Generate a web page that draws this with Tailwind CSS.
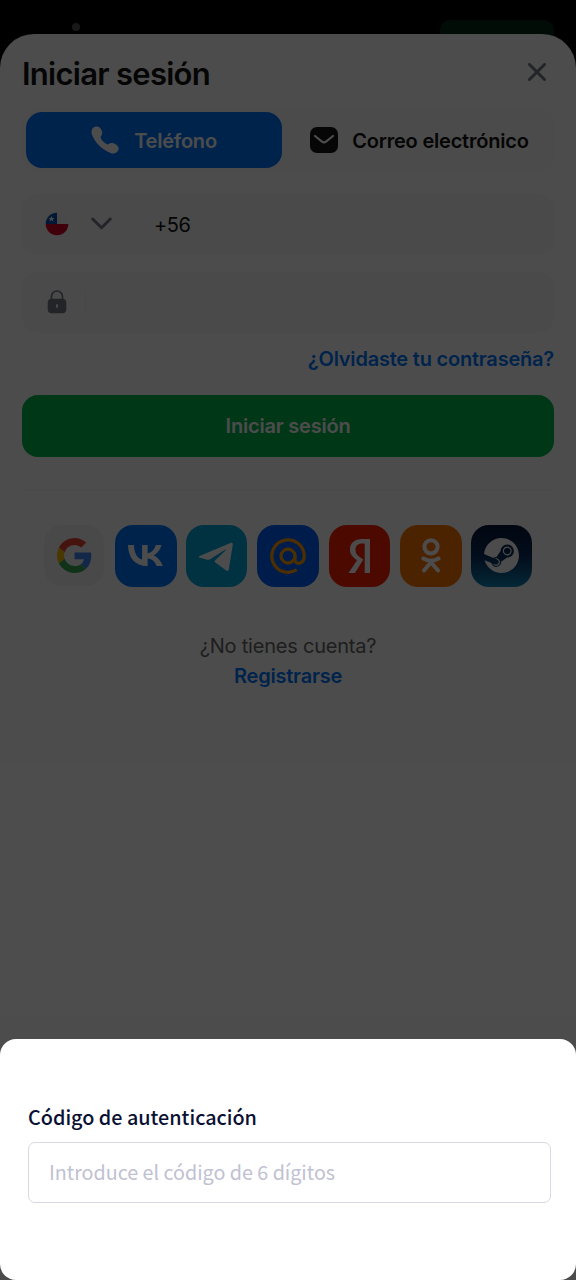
<!DOCTYPE html>
<html lang="es">
<head>
<meta charset="utf-8">
<title>Iniciar sesión</title>
<script src="https://cdn.jsdelivr.net/npm/@tailwindcss/browser@4"></script>
</head>
<body class="bg-black font-['Inter',sans-serif]">
<div class="relative w-[576px] h-[1280px] overflow-hidden bg-black">
  <div class="absolute left-[72px] top-[23px] size-2 rounded-full bg-[#555]"></div>
  <div class="absolute left-[440px] top-5 w-[114px] h-10 rounded-[10px] bg-[#002a12]"></div>

  <main class="absolute inset-x-0 top-[34px] bottom-0 rounded-t-[34px] bg-white px-[22px] flex flex-col tracking-[-0.21px]">
    <header class="h-[74px] flex items-center justify-between pt-[4px]">
      <h1 class="text-[31px] leading-none font-semibold tracking-[-0.72px] text-[#111]">Iniciar sesión</h1>
      <svg class="w-[18px] h-[18px] mr-2 -mt-[2px]" viewBox="0 0 18 18" fill="none" stroke="#757a85" stroke-width="3" stroke-linecap="round"><path d="M1.500 1.500l15 15M16.500 1.500l-15 15"/></svg>
    </header>

    <div class="h-[64px] rounded-2xl bg-[#fafafa] p-1 flex">
      <div class="w-[256px] h-[56px] rounded-2xl bg-[#0077ff] flex items-center justify-center gap-[15px] text-white">
        <svg class="w-7 h-7" viewBox="0 0 28 28" fill="currentColor"><path d="M1.200 3C2.500 1 4.400.4 6.500.6 9.500 1.200 12 5.500 11 8.200 10.500 9.500 9.500 10.500 9.600 11.500 10.500 14.500 13.500 17.500 16.500 18.400 17.700 18.500 18.600 17.200 20 17 22.500 16.500 26.800 19 27.600 21.500 28 23.500 26.800 25.600 25 26.800 23.400 27.800 21.500 27.800 19.500 27 11 23.500 4.500 17 1.300 9.500.4 7 .1 5 1.200 3Z"/></svg>
        <span class="text-[20px] font-semibold pt-[2px]">Teléfono</span>
      </div>
      <div class="flex-1 flex items-center justify-center gap-[14px] pl-[7px] text-[#111]">
        <svg class="w-7 h-[26px]" viewBox="0 0 28 26"><rect width="28" height="26" rx="7" fill="#161616"/><path d="M5 9l7 5.700q2 1.400 4 0L23 9" fill="none" stroke="#fff" stroke-width="2.200" stroke-linecap="round"/></svg>
        <span class="text-[20px] font-semibold pt-[2px]">Correo electrónico</span>
      </div>
    </div>

    <div class="mt-[22px] h-[61px] rounded-2xl bg-[#f8f8f8] flex items-center pl-[23px]">
      <svg class="size-6 -mt-[2px]" viewBox="0 0 24 24"><defs><clipPath id="flag"><circle cx="12" cy="12" r="11.300"/></clipPath></defs><g clip-path="url(#flag)"><path fill="#f3f3f3" d="M0 0h24v12H0z"/><path fill="#0052b4" d="M0 0h12v12H0z"/><path fill="#d80027" d="M0 12h24v12H0z"/><path fill="#f3f3f3" d="M6.500 3.800l.8 2.200h2.300L7.800 7.400l.7 2.200-2-1.400-2 1.400.7-2.200L3.400 6h2.300z"/></g></svg>
      <svg class="ml-[22px] w-[21px] h-[13px] -mt-[2px]" viewBox="0 0 21 13" fill="none" stroke="#757a85" stroke-width="3" stroke-linecap="round" stroke-linejoin="round"><path d="M1.700 2L10.500 10.800l8.800-8.800"/></svg>
      <span class="ml-[42px] text-[20px] tracking-[-0.5px] text-[#111] pt-px">+56</span>
    </div>

    <div class="mt-[17px] h-[61px] rounded-2xl bg-[#f8f8f8] flex items-center pl-[25px]">
      <svg class="w-5 h-6 -mt-[2px]" viewBox="0 0 20 24"><path d="M4.500 11V6.500a5.500 5.500 0 0 1 11 0V11" fill="none" stroke="#757a85" stroke-width="1.700"/><rect x=".7" y="8.700" width="18.600" height="14.600" rx="4" fill="#757a85"/><rect x="9.100" y="14" width="1.800" height="4" rx=".9" fill="#f8f8f8"/></svg>
      <div class="ml-[18px] w-px h-6 bg-[#efefef]"></div>
    </div>

    <a class="mt-[11px] self-end text-[20px] leading-[30px] font-semibold text-[#0077ff]">¿Olvidaste tu contraseña?</a>

    <button class="mt-[21px] h-[61.500px] shrink-0 rounded-2xl bg-[#00b84c] text-white text-[20px] font-semibold pt-px tracking-[-0.21px]">Iniciar sesión</button>
    <div class="mt-[33.500px] h-px bg-[#f4f4f4]"></div>

    <div class="mt-[34px] pl-[22px] flex">
      <div class="w-[60px] h-[61px] rounded-[18px] bg-[#f5f5f5] flex items-center justify-center">
        <svg class="size-[35px]" viewBox="0 0 48 48"><path fill="#EA4335" d="M24 9.500c3.540 0 6.710 1.220 9.210 3.600l6.850-6.850C35.900 2.380 30.470 0 24 0 14.620 0 6.510 5.380 2.560 13.220l7.980 6.190C12.430 13.720 17.740 9.500 24 9.500z"/><path fill="#4285F4" d="M46.980 24.550c0-1.570-.15-3.090-.38-4.550H24v9.020h12.940c-.58 2.960-2.260 5.480-4.780 7.180l7.730 6c4.510-4.180 7.090-10.360 7.090-17.650z"/><path fill="#FBBC05" d="M10.530 28.590c-.48-1.450-.76-2.990-.76-4.590s.27-3.140.76-4.590l-7.980-6.190C.92 16.460 0 20.120 0 24s.92 7.540 2.560 10.780l7.970-6.190z"/><path fill="#34A853" d="M24 48c6.480 0 11.930-2.130 15.890-5.810l-7.730-6c-2.150 1.450-4.920 2.300-8.160 2.300-6.260 0-11.570-4.220-13.470-9.910l-7.980 6.190C6.510 42.620 14.620 48 24 48z"/></svg>
      </div>
      <div class="ml-[11px] size-[61.500px] rounded-[18px] bg-[#0077ff] flex items-center justify-center">
        <svg class="w-[35px] h-[21px]" viewBox="0 0 34 21" fill="#fff" preserveAspectRatio="none"><path d="M18.500 21C7 21 .3 13.200 0 0h5.800c.2 9.700 4.500 13.800 7.900 14.600V0h5.400v8.300C22.400 8 25.900 4.300 27 0h5.400c-.9 5.100-4.700 8.900-7.400 10.400 2.700 1.300 7 4.600 8.700 10.600h-6c-1.300-4-4.500-7-8.600-7.400V21z"/></svg>
      </div>
      <div class="ml-[9px] size-[61.500px] rounded-[18px] bg-[#00a8dc] flex items-center justify-center">
        <svg class="w-[36px] h-[30px] -ml-px mt-[3px]" viewBox="0 0 36 30" fill="#fff"><path d="M1 14.200L33 .8q2-.7 1.800 1.500L30.800 27.500q-.4 2.200-2.500 1.100L17 20.300q-1-.8 0-1.800L27.800 8.200q.8-1.200-.7-.5L11.500 17.500q-1 .6-2.200.2L1.200 15.500Q0 15 1 14.200z"/></svg>
      </div>
      <div class="ml-[10px] size-[61.500px] rounded-[18px] bg-[#005ff9] flex items-center justify-center">
        <svg class="size-[36px]" viewBox="0 0 36 36" fill="none" stroke="#ff9e00" stroke-width="3.300"><circle cx="18" cy="18" r="7"/><path d="M25 18v3.500c0 5.800 9.200 5.200 9.200-3.500A16.200 16.200 0 1 0 26.700 31.700"/></svg>
      </div>
      <div class="ml-[10px] size-[61.500px] rounded-[18px] bg-[#fc1f00] flex items-center justify-center">
        <svg class="w-[22px] h-[34px]" viewBox="0 0 22 34" fill="#fff"><path d="M22 34h-5.300V4.500h-2.400C10 4.500 7.500 6.700 7.500 10.500c0 4 1.700 5.800 5 8.100l2.800 2L7 34H.5L9 21.300C4.200 17.900 2 15.200 2 10.600 2 4.500 6.200 0 14.300 0H22z"/></svg>
      </div>
      <div class="ml-[10px] size-[61.500px] rounded-[18px] bg-[#ff7700] flex items-center justify-center">
        <svg class="w-5 h-[35px]" viewBox="0 0 20 35" fill="none" stroke="#fff" stroke-width="4"><circle cx="10" cy="8.800" r="6.600"/><path stroke-linecap="round" stroke-linejoin="round" d="M2.400 20.600Q10 25 17.600 20.600M10 24.300l-7 8.200M10 24.300l7 8.200"/></svg>
      </div>
      <div class="ml-[9px] size-[61.500px] rounded-[18px] bg-linear-to-b from-[#051839] via-[#0a2c5c] to-[#0e86b8] flex items-center justify-center">
        <svg class="size-[35px]" viewBox="0 0 24 24" fill="#fff"><path d="M11.979 0C5.678 0 .511 4.860.022 11.037l6.432 2.658c.545-.371 1.203-.59 1.912-.59.063 0 .125.004.188.006l2.861-4.142V8.910c0-2.495 2.028-4.524 4.524-4.524 2.494 0 4.524 2.031 4.524 4.527s-2.030 4.525-4.524 4.525h-.105l-4.076 2.911c0 .052.004.105.004.159 0 1.875-1.515 3.396-3.390 3.396-1.635 0-3.016-1.173-3.331-2.727L.436 15.270C1.862 20.307 6.486 24 11.979 24c6.627 0 11.999-5.373 11.999-12S18.605 0 11.979 0zM7.540 18.210l-1.473-.61c.262.543.714.999 1.314 1.250 1.297.539 2.793-.076 3.332-1.375.263-.63.264-1.319.005-1.949s-.75-1.121-1.377-1.383c-.624-.26-1.290-.249-1.878-.03l1.523.63c.956.400 1.409 1.500 1.009 2.455-.397.957-1.497 1.410-2.454 1.012zm11.415-9.303c0-1.662-1.353-3.015-3.015-3.015-1.665 0-3.015 1.353-3.015 3.015 0 1.665 1.350 3.015 3.015 3.015 1.663 0 3.015-1.350 3.015-3.015zm-5.273-.005c0-1.252 1.013-2.266 2.265-2.266 1.249 0 2.266 1.014 2.266 2.266 0 1.251-1.017 2.265-2.266 2.265-1.253 0-2.265-1.014-2.265-2.265z"/></svg>
      </div>
    </div>

    <div class="mt-[44.500px] text-center text-[20px] leading-[30px]">
      <p class="text-[#666]">¿No tienes cuenta?</p>
      <a class="font-semibold text-[#0077ff]">Registrarse</a>
    </div>
  </main>

  <div class="absolute inset-0 bg-black/70"></div>

  <section class="absolute inset-x-0 bottom-0 h-[241px] rounded-2xl bg-white pl-7 pr-[25.500px] pt-[63px] font-['Noto_Sans_CJK_SC',sans-serif]">
    <h2 class="text-[19.800px] leading-[30px] font-medium text-[#0a1033]">Código de autenticación</h2>
    <div class="mt-[10px] h-[60.500px] rounded-[7px] border border-[#d8d8e4] pl-5 flex items-center text-[19.700px] leading-none text-[#c0c1d2]">Introduce el código de 6 dígitos</div>
  </section>
</div>
</body>
</html>
